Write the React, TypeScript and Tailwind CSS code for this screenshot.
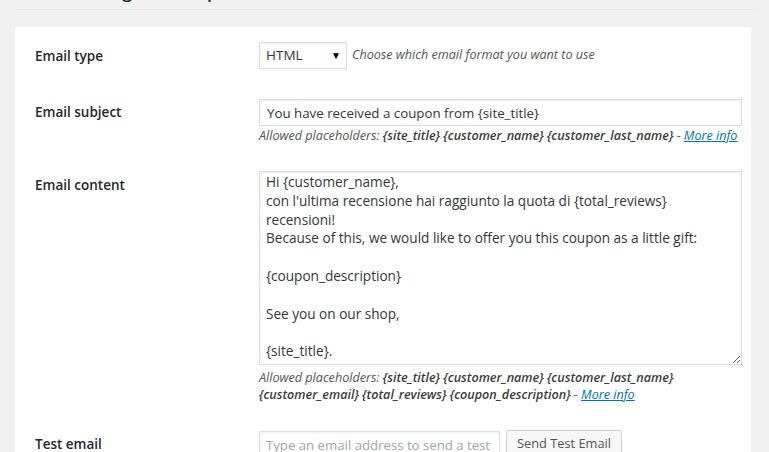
import React from 'react';

const content = `Hi {customer_name},
con l'ultima recensione hai raggiunto la quota di {total_reviews}
recensioni!
Because of this, we would like to offer you this coupon as a little gift:

{coupon_description}

See you on our shop,

{site_title}.`;

function Ph({ children }: { children: React.ReactNode }) {
  return <span className="font-semibold text-[#3c3c3c]">{children}</span>;
}

function MoreInfo() {
  return <a className="text-[#0073aa] underline">More info</a>;
}

export default function App() {
  return (
    <div className="min-h-[452px] bg-[#f1f1f1] font-['Open_Sans',sans-serif] text-[#444] overflow-hidden">
      {/* page heading, mostly scrolled out of view */}
      <div className="mx-[15px] h-[10px] overflow-hidden border-b border-[#e6e6e6]">
        <h2 className="mt-[-18px] pl-[5px] text-[18px] leading-[18px] font-semibold text-[#23282d]">
          Email settings for coupon
        </h2>
      </div>

      <div className="ml-[15px] mr-[18px] mt-[17px] bg-white pl-5 pr-[9px] min-h-[425px]">
        {/* Email type */}
        <div className="flex">
          <label className="w-[224px] shrink-0 pt-5 text-[13.5px] leading-[18px] font-semibold text-[#23282d]">Email type</label>
          <div className="flex items-center gap-[5px] py-[15px]">
            <div className="flex h-[27px] w-[88px] items-center justify-between border border-[#ddd] pl-[6px] pr-[5px] text-[13.5px] text-[#32373c] shadow-[inset_0_1px_2px_rgba(0,0,0,0.07)]">
              <span>HTML</span>
              <span className="text-[10px] text-black">▼</span>
            </div>
            <span className="text-[12.6px] italic text-[#555]">Choose which email format you want to use</span>
          </div>
        </div>

        {/* Email subject */}
        <div className="flex">
          <label className="w-[224px] shrink-0 pt-[19px] text-[13.5px] leading-[18px] font-semibold text-[#23282d]">Email subject</label>
          <div className="flex-1 pt-[15px] pb-[12px]">
            <input
              readOnly
              value="You have received a coupon from {site_title}"
              className="block h-[27px] w-full border border-[#ddd] px-[7px] text-[13.3px] text-[#32373c] shadow-[inset_0_1px_2px_rgba(0,0,0,0.07)] outline-none"
            />
            <p className="mt-px whitespace-nowrap text-[12.6px] leading-[17px] italic text-[#555]">
              Allowed placeholders: <Ph>{'{site_title}'}</Ph> <Ph>{'{customer_name}'}</Ph> <Ph>{'{customer_last_name}'}</Ph> - <MoreInfo />
            </p>
          </div>
        </div>

        {/* Email content */}
        <div className="flex">
          <label className="w-[224px] shrink-0 pt-5 text-[13.5px] leading-[18px] font-semibold text-[#23282d]">Email content</label>
          <div className="flex-1 pt-[15px] pb-[13px]">
            <textarea
              readOnly
              value={content}
              className="block h-[194px] w-full resize-y border border-[#ddd] px-[6px] pt-px pb-0 text-[13.6px] leading-[18.8px] text-[#32373c] shadow-[inset_0_1px_2px_rgba(0,0,0,0.07)] outline-none"
            />
            <p className="mt-[5px] whitespace-nowrap text-[12.6px] leading-[16.5px] italic text-[#555]">
              Allowed placeholders: <Ph>{'{site_title}'}</Ph> <Ph>{'{customer_name}'}</Ph> <Ph>{'{customer_last_name}'}</Ph>
              <br />
              <Ph>{'{customer_email}'}</Ph> <Ph>{'{total_reviews}'}</Ph> <Ph>{'{coupon_description}'}</Ph> - <MoreInfo />
            </p>
          </div>
        </div>

        {/* Test email */}
        <div className="flex">
          <label className="w-[224px] shrink-0 pt-[19px] text-[13.5px] leading-[18px] font-semibold text-[#23282d]">Test email</label>
          <div className="flex items-start gap-[6px] pt-[15px] pb-[15px]">
            <input
              readOnly
              placeholder="Type an email address to send a test email"
              className="block h-[28px] w-[241px] border border-[#ddd] px-[6px] text-[13.2px] text-[#32373c] placeholder:text-[#a0a5aa] shadow-[inset_0_1px_2px_rgba(0,0,0,0.07)] outline-none"
            />
            <button className="mt-[-1px] h-[28px] rounded-[3px] border border-[#ccc] bg-[#f7f7f7] px-[10px] text-[12.8px] text-[#555] shadow-[0_1px_0_#ccc]">
              Send Test Email
            </button>
          </div>
        </div>
      </div>
    </div>
  );
}
